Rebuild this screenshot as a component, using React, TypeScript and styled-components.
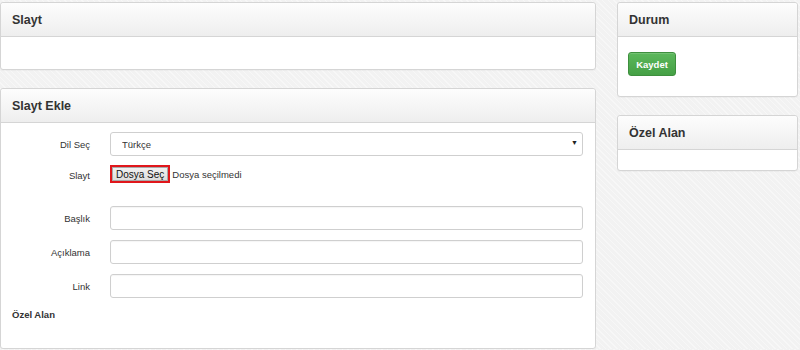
import React from 'react';
import styled, { createGlobalStyle } from 'styled-components';

const GlobalStyle = createGlobalStyle`
  body {
    margin: 0;
    background-color: #f2f2f2;
    background-image: repeating-linear-gradient(
      45deg,
      rgba(255, 255, 255, 0.35) 0px,
      rgba(255, 255, 255, 0.35) 1px,
      transparent 1px,
      transparent 4px
    );
    font-family: 'Liberation Sans', Arial, sans-serif;
    color: #333;
  }
`;

const Page = styled.div`
  display: flex;
  align-items: flex-start;
  gap: 21px;
  padding-top: 2px;
`;

const Column = styled.div<{ $width: number }>`
  display: flex;
  flex-direction: column;
  gap: 18px;
  width: ${(p) => p.$width}px;
`;

const Panel = styled.section`
  background: #fff;
  border: 1px solid #d5d5d5;
  border-radius: 3px;
  box-shadow: 0 1px 1px rgba(0, 0, 0, 0.03);
`;

const PanelHeader = styled.h3`
  margin: 0;
  height: 33px;
  padding: 0 11px;
  display: flex;
  align-items: center;
  background: linear-gradient(#fdfdfd, #eeeeee);
  border-bottom: 1px solid #d5d5d5;
  border-radius: 3px 3px 0 0;
  font-size: 12.5px;
  font-weight: bold;
  color: #333;
`;

const PanelBody = styled.div<{ $height?: number }>`
  min-height: ${(p) => p.$height ?? 0}px;
  box-sizing: border-box;
`;

const Form = styled.div`
  display: flex;
  flex-direction: column;
  padding: 9px 12px 28px 0;
`;

const Row = styled.div<{ $top?: number }>`
  display: grid;
  grid-template-columns: 89px 1fr;
  column-gap: 20px;
  align-items: center;
  margin-top: ${(p) => p.$top ?? 0}px;
`;

const Label = styled.label`
  text-align: right;
  font-size: 9.5px;
  color: #333;
`;

const Input = styled.input`
  box-sizing: border-box;
  width: 100%;
  height: 24px;
  margin: 0;
  border: 1px solid #cfcfcf;
  border-radius: 3px;
  box-shadow: inset 0 1px 1px rgba(0, 0, 0, 0.04);
  background: #fff;
`;

const SelectWrap = styled.div`
  position: relative;
`;

const Select = styled.select`
  box-sizing: border-box;
  width: 100%;
  height: 24px;
  margin: 0;
  padding: 0 0 0 11px;
  appearance: none;
  border: 1px solid #cfcfcf;
  border-radius: 3px;
  background: #fff;
  font-family: 'Liberation Sans', Arial, sans-serif;
  font-size: 9.5px;
  color: #333;
`;

const Caret = styled.span`
  position: absolute;
  right: 5px;
  top: 7px;
  font-size: 7px;
  color: #222;
  pointer-events: none;
`;

const FileRow = styled.div`
  display: flex;
  align-items: center;
  gap: 2px;
  font-size: 9.5px;
  color: #333;
`;

const FileButton = styled.button`
  box-sizing: border-box;
  height: 18px;
  padding: 0 4px;
  border: 2px solid #e0161b;
  background: linear-gradient(#f2f2f2, #dcdcdc);
  box-shadow: inset 0 0 0 1px #a9a9a9;
  font-family: 'Liberation Sans', Arial, sans-serif;
  font-size: 10px;
  color: #111;
`;

const SectionLabel = styled.div`
  margin: 11px 0 0 11px;
  font-size: 9.5px;
  font-weight: bold;
  color: #333;
`;

const ActionBody = styled.div`
  padding: 15px 10px 20px;
`;

const SaveButton = styled.button`
  width: 48px;
  height: 24px;
  border: 1px solid #3e8f3e;
  border-radius: 3px;
  background: linear-gradient(#5cb85c, #45a045);
  color: #fff;
  font-family: 'Liberation Sans', Arial, sans-serif;
  font-size: 9.5px;
  font-weight: bold;
  box-shadow: inset 0 1px 0 rgba(255, 255, 255, 0.15);
`;

const fields = ['Başlık', 'Açıklama', 'Link'];

const App: React.FunctionComponent = () => {
  return (
    <>
      <GlobalStyle />
      <Page>
        <Column $width={596}>
          <Panel>
            <PanelHeader>Slayt</PanelHeader>
            <PanelBody $height={32} />
          </Panel>
          <Panel>
            <PanelHeader>Slayt Ekle</PanelHeader>
            <Form>
              <Row>
                <Label>Dil Seç</Label>
                <SelectWrap>
                  <Select defaultValue="tr">
                    <option value="tr">Türkçe</option>
                  </Select>
                  <Caret>▼</Caret>
                </SelectWrap>
              </Row>
              <Row $top={9}>
                <Label style={{ paddingTop: 3 }}>Slayt</Label>
                <FileRow>
                  <FileButton>Dosya Seç</FileButton>
                  <span>Dosya seçilmedi</span>
                </FileRow>
              </Row>
              {fields.map((field, i) => (
                <Row key={field} $top={i === 0 ? 23 : 10}>
                  <Label>{field}</Label>
                  <Input type="text" />
                </Row>
              ))}
              <SectionLabel>Özel Alan</SectionLabel>
            </Form>
          </Panel>
        </Column>
        <Column $width={181}>
          <Panel>
            <PanelHeader>Durum</PanelHeader>
            <ActionBody>
              <SaveButton>Kaydet</SaveButton>
            </ActionBody>
          </Panel>
          <Panel>
            <PanelHeader>Özel Alan</PanelHeader>
            <PanelBody $height={20} />
          </Panel>
        </Column>
      </Page>
    </>
  );
};

export default App;
